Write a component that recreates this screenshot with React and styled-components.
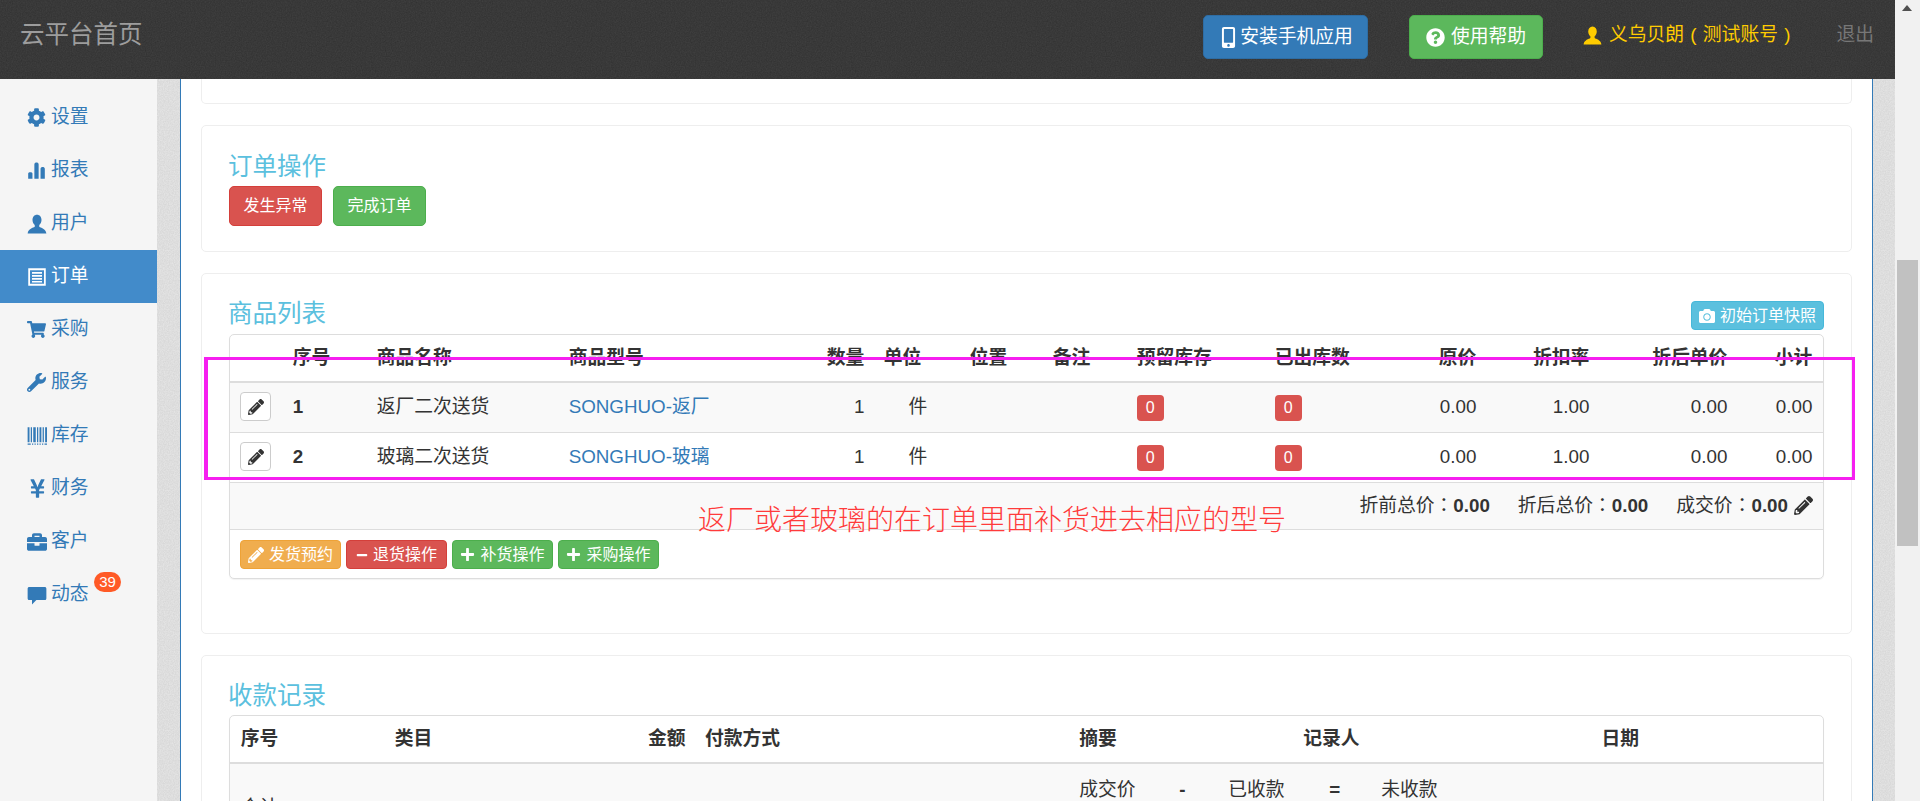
import React from 'react';
import styled, { createGlobalStyle } from 'styled-components';
import {
  FaCog, FaShoppingCart, FaWrench, FaYenSign, FaBriefcase, FaPencilAlt,
  FaMobileAlt, FaQuestionCircle, FaPlus, FaMinus, FaCamera,
} from 'react-icons/fa';

const noise = alpha =>
  `url("data:image/svg+xml,%3Csvg xmlns='http://www.w3.org/2000/svg' width='240' height='240'%3E%3Cfilter id='n'%3E%3CfeTurbulence type='fractalNoise' baseFrequency='.8' numOctaves='2' stitchTiles='stitch'/%3E%3CfeColorMatrix values='0 0 0 0 0 0 0 0 0 0 0 0 0 0 0 0 0 0 ${alpha} 0'/%3E%3C/filter%3E%3Crect width='240' height='240' filter='url(%23n)'/%3E%3C/svg%3E")`;

const Global = createGlobalStyle`
  html, body { margin: 0; padding: 0; height: 801px; overflow: hidden; background: #fff; }
  body { font-family: "Liberation Sans", "Noto Sans CJK SC", sans-serif; font-size: 18.8px; line-height: 1.43; color: #333; }
  * { box-sizing: border-box; }
`;

const Page = styled.div`position: relative; display: flex; width: 1920px; height: 801px; overflow: hidden;`;
const Viewport = styled.div`flex: 1; min-width: 0; display: flex; flex-direction: column;`;
const Header = styled.header`
  height: 79px; flex: none; display: flex; align-items: center; padding: 0 21px 0 20px;
  background-color: #424242;
  background-image: ${noise(0.28)};
`;
const Brand = styled.div`font-size: 24.5px; color: #9d9d9d; margin-right: auto; margin-top: -9px;`;
const TopButton = styled.div`
  height: 44px; display: flex; align-items: center; border-radius: 5px; color: #fff;
  padding: 0 ${p => p.$pad}px; gap: ${p => p.$gap}px; margin-right: ${p => p.$after}px; margin-top: -5px;
  background: ${p => p.$bg}; border: 1px solid ${p => p.$line};
`;
const UserName = styled.div`display: flex; align-items: center; gap: 7px; color: #fc0; margin-right: 46px; margin-top: -9px; white-space: pre; word-spacing: 1px;`;
const Logout = styled.div`color: #777; margin-top: -9px;`;

const Body = styled.div`flex: 1; min-height: 0; display: flex;`;
const Sidebar = styled.nav`width: 157px; flex: none; background: #f5f5f5; padding-top: 12px;`;
const NavItem = styled.div`
  position: relative; height: 53px; display: flex; align-items: center; padding: 0 0 0 27px;
  color: ${p => (p.$active ? '#fff' : '#337ab7')};
  background: ${p => (p.$active ? '#428bca' : 'transparent')};
`;
const NavIcon = styled.span`width: 24px; flex: none; display: flex; align-items: center;`;
const NavBadge = styled.span`
  position: absolute; left: 94px; top: 4px; width: 27px; height: 20px; border-radius: 10px;
  background: #ff5a26; color: #fff; font-size: 15px; line-height: 20px; text-align: center;
`;
const Gutter = styled.div`
  width: ${p => p.$w}px; flex: none; background-color: #e8e8e8;
  background-image: ${noise(0.09)};
`;
const Main = styled.main`
  flex: 1; min-width: 0; background: #fff; overflow: hidden;
  border-left: 1px solid #337ab7; border-right: 1px solid #337ab7; padding: 0 20px;
`;
const Card = styled.section`
  background: #fff; border: 1px solid #eee; border-radius: 5px; margin-bottom: 21px;
  padding: ${p => p.$top}px 27px ${p => p.$bottom}px;
`;
const ClippedCard = styled.section`
  height: 25px; background: #fff; border: 1px solid #eee; border-top: 0;
  border-radius: 0 0 5px 5px; margin-bottom: 21px;
`;
const Title = styled.h3`margin: 0 0 ${p => p.$gap}px -1px; font-size: 24.5px; font-weight: 400; line-height: 30px; color: #5bc0de;`;
const TitleRow = styled.div`display: flex; justify-content: space-between; align-items: flex-end; height: 31px; margin-bottom: 4px;`;
const ActionRow = styled.div`display: flex; gap: 11px;`;
const Btn = styled.button`
  font: inherit; font-size: 16px; color: #fff; height: 40px; padding: 0 13.5px; border-radius: 5px;
  background: ${p => p.$bg}; border: 1px solid ${p => p.$line};
`;
const XsBtn = styled.button`
  font: inherit; font-size: 16px; line-height: 1; color: #fff; height: 29px; padding: 0; width: 101px;
  display: flex; align-items: center; justify-content: center; gap: 5px; border-radius: 4px;
  background: ${p => p.$bg}; border: 1px solid ${p => p.$line};
`;
const SnapBtn = styled(XsBtn)`width: 133px;`;
const Panel = styled.div`border: 1px solid #ddd; border-radius: 5px; overflow: hidden; box-shadow: 0 1px 1px rgba(0,0,0,.05);`;
const Table = styled.table`width: 100%; table-layout: fixed; border-collapse: separate; border-spacing: 0;`;
const Th = styled.th`
  height: 48px; padding: 0 10.67px; font-weight: 700; text-align: ${p => p.$align || 'left'};
  border-bottom: 2px solid #ddd; white-space: nowrap;
`;
const AmountTh = styled(Th)`padding-right: 8.67px;`;
const Tr = styled.tr`background: ${p => (p.$odd ? '#f9f9f9' : '#fff')};`;
const Td = styled.td`
  height: 50px; padding: 0 10.67px 1px; border-bottom: 1px solid #ddd; white-space: nowrap;
  text-align: ${p => p.$align || 'left'}; font-weight: ${p => (p.$bold ? 700 : 400)};
`;
const EditCell = styled(Td)`padding-left: 10px;`;
const QtyTd = styled(Td)`padding-right: 8.67px;`;
const UnitTd = styled(Td)`padding-left: 14.67px;`;
const SumTd = styled(Td)`height: 82px; padding-top: 8px; padding-bottom: 0;`;
const AmountTd = styled(SumTd)`padding-right: 8.67px;`;
const SummaryTd = styled(SumTd)`vertical-align: top; padding-top: 12px;`;
const EditBtn = styled.button`
  width: 31px; height: 29px; padding: 0; background: #fff; border: 1px solid #ccc; border-radius: 4px;
  color: #333; display: flex; align-items: center; justify-content: center; margin-top: -1px;
`;
const ModelLink = styled.a`color: #337ab7; text-decoration: none;`;
const CountTag = styled.span`
  display: inline-block; width: 27px; height: 26px; margin-top: 1px; background: #d9534f; border-radius: 4px;
  color: #fff; font-size: 16px; line-height: 25px; text-align: center; vertical-align: middle;
`;
const Totals = styled.div`
  height: 47px; background: #f9f9f9; border-bottom: 1px solid #ddd; display: flex;
  justify-content: flex-end; align-items: center; gap: 28px; padding: 0 10px 1px 0;
`;
const TotalItem = styled.span`display: flex; align-items: center; gap: 6px;`;
const Colon = styled.span`font-family: "Noto Sans CJK TC", sans-serif;`;
const ToolBar = styled.div`height: 48px; display: flex; gap: 5px; padding: 10px 0 0 10px;`;
const SumGrid = styled.div`display: grid; grid-template-columns: 100px 49px 101px 52px auto; line-height: 27px;`;
const Scrollbar = styled.aside`position: relative; width: 25px; flex: none; background: #f1f1f1;`;
const ScrollArrow = styled.span`
  position: absolute; left: 7px; top: 5px; width: 0; height: 0;
  border-left: 5.5px solid transparent; border-right: 5.5px solid transparent; border-bottom: 6px solid #505050;
`;
const ScrollThumb = styled.span`position: absolute; left: 2px; top: 260px; width: 21px; height: 286px; background: #c1c1c1;`;
const MarkBox = styled.div`position: absolute; left: 204px; top: 357px; width: 1651px; height: 123px; border: solid #f61ff0; border-width: 3px 3px 3px 4px;`;
const Note = styled.div`position: absolute; left: 698px; top: 501px; font-size: 28px; line-height: 40px; color: #ff3b3b; white-space: nowrap; font-weight: 300;`;

const Glyph = ({ d, size = 18 }) => (
  <svg width={size} height={size} viewBox="0 0 16 16" fill="currentColor" fillRule="evenodd"><path d={d} /></svg>
);
const USER = 'M8 .5C5.8.5 4.4 2.3 4.4 4.7c0 1.8.8 3.2 1.8 4v1.4C5 11 1 11.6.5 15.5h15c-.5-3.9-4.5-4.5-5.7-5.4V8.7c1-.8 1.8-2.2 1.8-4C11.6 2.3 10.2.5 8 .5z';
const STATS = 'M1 10.5c0-1.5 3.6-1.5 3.6 0V15H1zM6.2 3c0-2.2 3.6-2.2 3.6 0v12H6.2zM11.4 6.5c0-1.8 3.6-1.8 3.6 0V15h-3.6z';
const LIST = 'M1 1h14v14H1zM2.4 2.6v10.8h11.2V2.6zM4 4h8v1.4H4zM4 6.4h8v1.4H4zM4 8.8h8v1.4H4zM4 11.1h8v1.2H4z';
const COMMENT = 'M2 1.5h12c1 0 1.5.5 1.5 1.5v7.5c0 1-.5 1.5-1.5 1.5H7.5L4 15.5V12H2c-1 0-1.5-.5-1.5-1.5V3c0-1 .5-1.5 1.5-1.5z';
const BARCODE = 'M.5 1H2v12H.5zM3 1h1v12H3zM5 1h2v12H5zM8 1h1v12H8zM10 1h1.5v12H10zM12.5 1h1v12h-1zM14.5 1H16v12h-1.5zM.5 14H3v1H.5zM4 14h1v1H4zM6 14h1v1H6zM8 14h1v1H8zM10 14h1v1h-1zM12 14h1v1h-1zM14 14h2v1h-2z';

const nav = [
  ['设置', <FaCog size={19} />],
  ['报表', <Glyph d={STATS} size={19} />],
  ['用户', <Glyph d={USER} size={20} />],
  ['订单', <Glyph d={LIST} size={20} />, true],
  ['采购', <FaShoppingCart size={19} />],
  ['服务', <FaWrench size={19} />],
  ['库存', <Glyph d={BARCODE} size={20} />],
  ['财务', <FaYenSign size={21} />],
  ['客户', <FaBriefcase size={20} />],
  ['动态', <Glyph d={COMMENT} size={20} />, false, '39'],
];

const goodsCols = [52, 84, 192, 258, 57, 86, 83, 84, 138, 128, 95, 113, 138, 85];
const payCols = [154, 251, 59, 374, 224, 298, 232];
const goods = [
  { no: 1, name: '返厂二次送货', model: 'SONGHUO-返厂' },
  { no: 2, name: '玻璃二次送货', model: 'SONGHUO-玻璃' },
];

const Cols = ({ list }) => <colgroup>{list.map((w, i) => <col key={i} width={w} />)}</colgroup>;

export default function App() {
  return (
    <>
      <Global />
      <Page>
        <Viewport>
          <Header>
            <Brand>云平台首页</Brand>
            <TopButton $bg="#337ab7" $line="#2e6da4" $pad={14} $gap={1} $after={41}><FaMobileAlt size={21} />安装手机应用</TopButton>
            <TopButton $bg="#5cb85c" $line="#4cae4c" $pad={16} $gap={6} $after={40}><FaQuestionCircle size={19} />使用帮助</TopButton>
            <UserName><Glyph d={USER} size={19} />义乌贝朗 ( 测试账号 )</UserName>
            <Logout>退出</Logout>
          </Header>
          <Body>
            <Sidebar>
              {nav.map(([label, icon, active, badge]) => (
                <NavItem key={label} $active={active}>
                  <NavIcon>{icon}</NavIcon>{label}
                  {badge && <NavBadge>{badge}</NavBadge>}
                </NavItem>
              ))}
            </Sidebar>
            <Gutter $w={23} />
            <Main>
              <ClippedCard />
              <Card $top={26} $bottom={25}>
                <Title $gap={4}>订单操作</Title>
                <ActionRow>
                  <Btn $bg="#d9534f" $line="#d43f3a">发生异常</Btn>
                  <Btn $bg="#5cb85c" $line="#4cae4c">完成订单</Btn>
                </ActionRow>
              </Card>
              <Card $top={25} $bottom={54}>
                <TitleRow>
                  <Title $gap={1}>商品列表</Title>
                  <SnapBtn $bg="#5bc0de" $line="#46b8da"><FaCamera size={16} />初始订单快照</SnapBtn>
                </TitleRow>
                <Panel>
                  <Table>
                    <Cols list={goodsCols} />
                    <thead>
                      <tr>
                        <Th />
                        <Th>序号</Th>
                        <Th>商品名称</Th>
                        <Th>商品型号</Th>
                        <Th $align="right">数量</Th>
                        <Th>单位</Th>
                        <Th>位置</Th>
                        <Th>备注</Th>
                        <Th>预留库存</Th>
                        <Th>已出库数</Th>
                        <Th $align="right">原价</Th>
                        <Th $align="right">折扣率</Th>
                        <Th $align="right">折后单价</Th>
                        <Th $align="right">小计</Th>
                      </tr>
                    </thead>
                    <tbody>
                      {goods.map(g => (
                        <Tr key={g.no} $odd={g.no === 1}>
                          <EditCell><EditBtn><FaPencilAlt size={16} /></EditBtn></EditCell>
                          <Td $bold>{g.no}</Td>
                          <Td>{g.name}</Td>
                          <Td><ModelLink>{g.model}</ModelLink></Td>
                          <QtyTd $align="right">1</QtyTd>
                          <UnitTd $align="center">件</UnitTd>
                          <Td />
                          <Td />
                          <Td><CountTag>0</CountTag></Td>
                          <Td><CountTag>0</CountTag></Td>
                          <Td $align="right">0.00</Td>
                          <Td $align="right">1.00</Td>
                          <Td $align="right">0.00</Td>
                          <Td $align="right">0.00</Td>
                        </Tr>
                      ))}
                    </tbody>
                  </Table>
                  <Totals>
                    <span>折前总价<Colon lang="zh-Hant">：</Colon><b>0.00</b></span>
                    <span>折后总价<Colon lang="zh-Hant">：</Colon><b>0.00</b></span>
                    <TotalItem><span>成交价<Colon lang="zh-Hant">：</Colon><b>0.00</b></span><FaPencilAlt size={19} /></TotalItem>
                  </Totals>
                  <ToolBar>
                    <XsBtn $bg="#f0ad4e" $line="#eea236"><FaPencilAlt size={16} />发货预约</XsBtn>
                    <XsBtn $bg="#d9534f" $line="#d43f3a"><FaMinus size={12} />退货操作</XsBtn>
                    <XsBtn $bg="#5cb85c" $line="#4cae4c"><FaPlus size={15} />补货操作</XsBtn>
                    <XsBtn $bg="#5cb85c" $line="#4cae4c"><FaPlus size={15} />采购操作</XsBtn>
                  </ToolBar>
                </Panel>
              </Card>
              <Card $top={25} $bottom={20}>
                <Title $gap={4}>收款记录</Title>
                <Panel>
                  <Table>
                    <Cols list={payCols} />
                    <thead>
                      <tr>
                        <Th>序号</Th>
                        <Th>类目</Th>
                        <AmountTh $align="right">金额</AmountTh>
                        <Th>付款方式</Th>
                        <Th>摘要</Th>
                        <Th>记录人</Th>
                        <Th>日期</Th>
                      </tr>
                    </thead>
                    <tbody>
                      <Tr $odd>
                        <SumTd>合计</SumTd>
                        <SumTd />
                        <AmountTd $bold $align="right">0.00</AmountTd>
                        <SumTd />
                        <SummaryTd>
                          <SumGrid>
                            <span>成交价</span><b>-</b><span>已收款</span><b>=</b><span>未收款</span>
                          </SumGrid>
                        </SummaryTd>
                        <SumTd />
                        <SumTd />
                      </Tr>
                    </tbody>
                  </Table>
                </Panel>
              </Card>
            </Main>
            <Gutter $w={22} />
          </Body>
        </Viewport>
        <Scrollbar><ScrollArrow /><ScrollThumb /></Scrollbar>
        <MarkBox />
        <Note>返厂或者玻璃的在订单里面补货进去相应的型号</Note>
      </Page>
    </>
  );
}
